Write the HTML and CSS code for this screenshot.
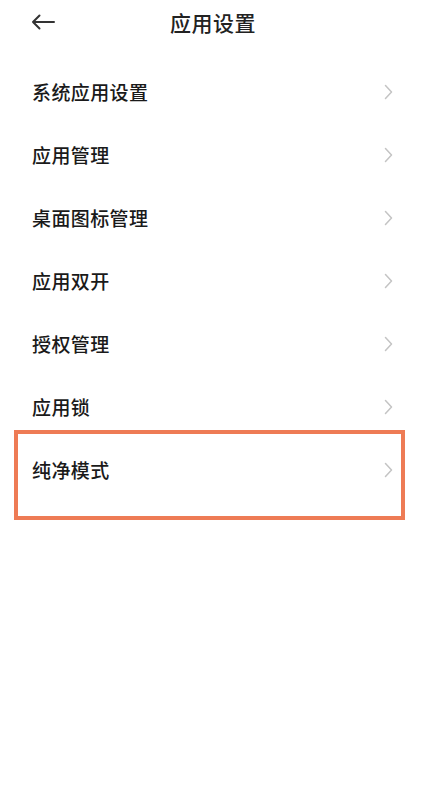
FILE: index.html
```html
<!DOCTYPE html>
<html>
<head>
    <title>应用设置</title>
    <link rel="stylesheet" href="styles.css">
</head>
<body>
    <div class="header">
        <svg class="back" width="24" height="16" viewBox="0 0 24 16">
            <path d="M23 8H2M8.5 1.5L2 8l6.5 6.5" fill="none" stroke="#333" stroke-width="2" stroke-linecap="round" stroke-linejoin="round"/>
        </svg>
        <h1>应用设置</h1>
    </div>

    <ul class="menu">
        <li><span>系统应用设置</span><svg class="chev" width="9" height="16" viewBox="0 0 9 16"><path d="M1.5 1.5L7.5 8l-6 6.5"/></svg></li>
        <li><span>应用管理</span><svg class="chev" width="9" height="16" viewBox="0 0 9 16"><path d="M1.5 1.5L7.5 8l-6 6.5"/></svg></li>
        <li><span>桌面图标管理</span><svg class="chev" width="9" height="16" viewBox="0 0 9 16"><path d="M1.5 1.5L7.5 8l-6 6.5"/></svg></li>
        <li><span>应用双开</span><svg class="chev" width="9" height="16" viewBox="0 0 9 16"><path d="M1.5 1.5L7.5 8l-6 6.5"/></svg></li>
        <li><span>授权管理</span><svg class="chev" width="9" height="16" viewBox="0 0 9 16"><path d="M1.5 1.5L7.5 8l-6 6.5"/></svg></li>
        <li><span>应用锁</span><svg class="chev" width="9" height="16" viewBox="0 0 9 16"><path d="M1.5 1.5L7.5 8l-6 6.5"/></svg></li>
        <li><span>纯净模式</span><svg class="chev" width="9" height="16" viewBox="0 0 9 16"><path d="M1.5 1.5L7.5 8l-6 6.5"/></svg></li>
    </ul>

    <div class="highlight"></div>
</body>
</html>
```

FILE: styles.css
```css
body {
    margin: 0;
    background: #fff;
    font-family: "Noto Sans CJK SC", "Noto Sans", sans-serif;
    color: #1a1a1a;
    width: 426px;
    height: 800px;
    position: relative;
    overflow: hidden;
}
.header {
    height: 44px;
    display: flex;
    align-items: center;
    justify-content: center;
    position: relative;
}
.back {
    position: absolute;
    left: 31px;
    top: 14px;
}
h1 {
    margin: 0;
    font-size: 21px;
    font-weight: 500;
    color: #222;
    letter-spacing: 0.5px;
}
.menu {
    list-style: none;
    margin: 0;
    padding: 16px 0 0;
}
.menu li {
    height: 63px;
    display: flex;
    align-items: center;
    justify-content: space-between;
    padding: 0 33px 0 32px;
    font-size: 19px;
    font-weight: 500;
    letter-spacing: 0.4px;
}
.chev path {
    fill: none;
    stroke: #c4c4c4;
    stroke-width: 1.5;
    stroke-linecap: round;
    stroke-linejoin: round;
}
.highlight {
    position: absolute;
    left: 14px;
    top: 430px;
    width: 383px;
    height: 82px;
    border: 4px solid #ee7b55;
}
```
